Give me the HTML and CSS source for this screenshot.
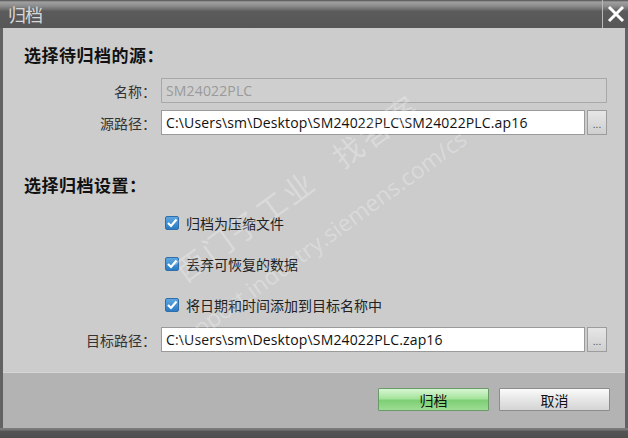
FILE: index.html
```html
<!DOCTYPE html>
<html>
<head>
<meta charset="utf-8">
<link rel="stylesheet" href="styles.css">
</head>
<body>
<div class="window">
  <div class="titlebar">
    <span class="title">归档</span>
    <span class="close">
      <svg width="18" height="18" viewBox="0 0 18 18"><path d="M2 2 L16 16 M16 2 L2 16" stroke="#fff" stroke-width="3"/></svg>
    </span>
  </div>
  <div class="body">
    <h2 class="heading">选择待归档的源：</h2>
    <div class="form">
      <div class="row">
        <span class="label">名称：</span>
        <div class="input disabled wide">SM24022PLC</div>
      </div>
      <div class="row">
        <span class="label">源路径：</span>
        <div class="input">C:\Users\sm\Desktop\SM24022PLC\SM24022PLC.ap16</div>
        <div class="browse">...</div>
      </div>
    </div>
    <h2 class="heading second">选择归档设置：</h2>
    <div class="checks">
      <div class="check"><span class="box"><svg width="14" height="14" viewBox="0 0 14 14"><path d="M3 7 L6 10 L11.5 3.5" fill="none" stroke="#fff" stroke-width="2.2"/></svg></span>归档为压缩文件</div>
      <div class="check"><span class="box"><svg width="14" height="14" viewBox="0 0 14 14"><path d="M3 7 L6 10 L11.5 3.5" fill="none" stroke="#fff" stroke-width="2.2"/></svg></span>丢弃可恢复的数据</div>
      <div class="check"><span class="box"><svg width="14" height="14" viewBox="0 0 14 14"><path d="M3 7 L6 10 L11.5 3.5" fill="none" stroke="#fff" stroke-width="2.2"/></svg></span>将日期和时间添加到目标名称中</div>
    </div>
    <div class="row target">
      <span class="label">目标路径：</span>
      <div class="input">C:\Users\sm\Desktop\SM24022PLC.zap16</div>
      <div class="browse">...</div>
    </div>
    <div class="watermark big">西门子工业&nbsp;&nbsp;&nbsp;找答案</div>
    <div class="watermark small">support.industry.siemens.com/cs</div>
  </div>
  <div class="footer">
    <button class="btn primary">归档</button>
    <button class="btn">取消</button>
  </div>
  <div class="bottombar"></div>
</div>
</body>
</html>
```

FILE: styles.css
```css
* { box-sizing: border-box; }
html, body { margin: 0; padding: 0; }
body {
  width: 628px;
  height: 438px;
  overflow: hidden;
  font-family: "Noto Sans CJK SC", "Noto Sans", sans-serif;
  background: #5a5a5a;
}
.window {
  width: 628px;
  height: 438px;
  display: flex;
  flex-direction: column;
  border-left: 3px solid #626262;
  border-right: 3px solid #626262;
  background: #cccccc;
}
.titlebar {
  height: 28px;
  flex: none;
  display: flex;
  align-items: center;
  justify-content: space-between;
  background: linear-gradient(#4e4e4e 0px, #a0a0a0 2px, #8c8c8c 6px, #6a6a6a 10px, #5b5b5b 11px, #575757 28px);
  margin-left: -3px;
  margin-right: -3px;
  padding-left: 8px;
}
.title {
  color: #d8d8d8;
  font-size: 18px;
  line-height: 28px;
  letter-spacing: -1px;
}
.close {
  width: 26px;
  height: 28px;
  display: flex;
  align-items: center;
  justify-content: center;
  border-left: 1px solid #b8b8b8;
}
.body {
  position: relative;
  flex: 1;
  padding: 16px 0 0 21px;
  overflow: hidden;
  border-bottom: 1px solid #d6d6d6;
}
.heading {
  margin: 0;
  font-size: 17px;
  font-weight: bold;
  line-height: 22px;
  color: #111;
  letter-spacing: 0.5px;
}
.heading.second { margin-top: 39px; }
.form {
  margin-top: 12px;
  display: flex;
  flex-direction: column;
  gap: 7px;
}
.row {
  display: flex;
  align-items: center;
  height: 25px;
}
.label {
  width: 132px;
  margin-right: 5px;
  text-align: right;
  font-size: 14px;
  color: #333;
}
.input {
  width: 424px;
  height: 25px;
  background: #fff;
  border: 1px solid #9a9a9a;
  font-family: "Open Sans", "Noto Sans", sans-serif;
  font-size: 14px;
  line-height: 23px;
  padding-left: 4px;
  color: #111;
  white-space: nowrap;
  letter-spacing: 0.15px;
}
.input.disabled {
  background: #cfcfcf;
  border-color: #a8a8a8;
  color: #9a9a9a;
}
.input.wide { width: 446px; }
.browse {
  width: 20px;
  height: 25px;
  margin-left: 2px;
  border: 1px solid #9c9c9c;
  background: linear-gradient(#e6e6e6, #cfcfcf);
  font-size: 10px;
  color: #555;
  text-align: center;
  line-height: 26px;
}
.checks {
  margin-top: 17px;
  padding-left: 141px;
  display: flex;
  flex-direction: column;
  gap: 22px;
}
.check {
  display: flex;
  align-items: center;
  height: 19px;
  font-size: 14px;
  color: #222;
}
.box {
  width: 14px;
  height: 14px;
  margin-right: 7px;
  border: 1px solid #2f6ea8;
  border-radius: 2px;
  background: linear-gradient(#5ea6e0, #2a7bc4);
  display: flex;
  align-items: center;
  justify-content: center;
}
.box svg { margin: -1px; }
.target { margin-top: 13px; }
.watermark {
  position: absolute;
  color: rgba(255,255,255,0.28);
  white-space: nowrap;
  transform-origin: left center;
  pointer-events: none;
}
.watermark.big {
  left: 175px;
  top: 225px;
  font-size: 30px;
  line-height: 40px;
  transform: rotate(-36deg);
  letter-spacing: 3px;
}
.watermark.small {
  left: 172px;
  top: 302px;
  font-family: "Open Sans", sans-serif;
  font-size: 23px;
  line-height: 30px;
  transform: rotate(-36deg);
}
.footer {
  height: 55px;
  flex: none;
  background: #b3b3b3;
  display: flex;
  justify-content: flex-end;
  align-items: flex-start;
  gap: 10px;
  padding: 15px 15px 0 0;
}
.btn {
  width: 111px;
  height: 23px;
  border: 1px solid #8c8c8c;
  border-radius: 1px;
  background: linear-gradient(#fbfbfb, #e6e6e6 50%, #d4d4d4);
  font-family: "Noto Sans CJK SC", sans-serif;
  font-size: 14px;
  line-height: 20px;
  color: #111;
  padding: 0;
}
.btn.primary {
  border-color: #6a9a6a;
  background: linear-gradient(#d8f5d4, #a5e49c 45%, #7dcf74 55%, #9ddc94);
}
.bottombar {
  height: 10px;
  flex: none;
  margin-left: -3px;
  margin-right: -3px;
  background: linear-gradient(#7a7a7a 0, #777 2px, #555 3px, #4e4e4e);
}
```
